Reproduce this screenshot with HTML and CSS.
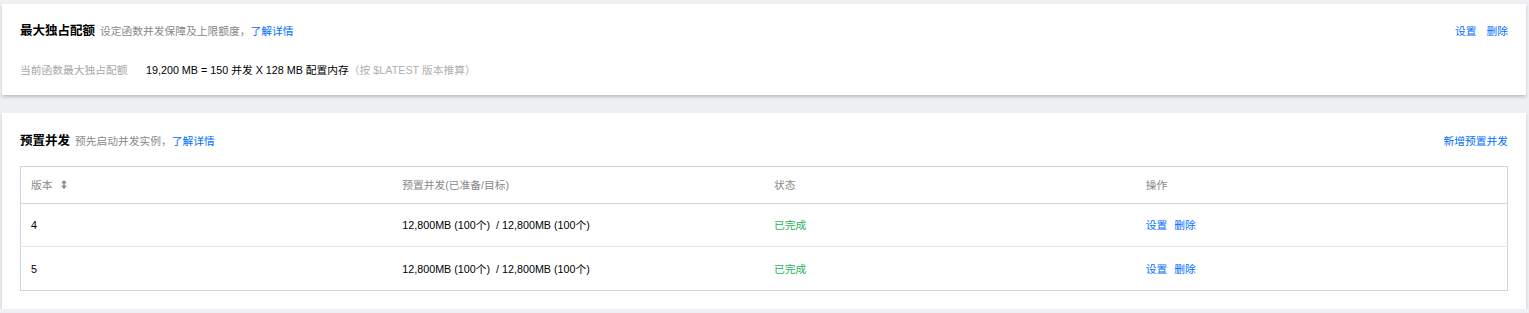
FILE: index.html
```html
<!DOCTYPE html>
<html lang="zh-CN">
<head>
<meta charset="utf-8">
<title>并发配额</title>
<link rel="stylesheet" href="styles.css">
</head>
<body>
<div class="page">
  <section class="card card-quota">
    <div class="card-head">
      <div class="head-left">
        <h3 class="title">最大独占配额</h3>
        <span class="desc">设定函数并发保障及上限额度，</span>
        <a class="link">了解详情</a>
      </div>
      <div class="head-right">
        <a class="link">设置</a>
        <a class="link">删除</a>
      </div>
    </div>
    <div class="info-row">
      <span class="info-label">当前函数最大独占配额</span>
      <span class="info-value">19,200 MB = 150 并发 X 128 MB 配置内存</span>
      <span class="info-note">（按 $LATEST 版本推算）</span>
    </div>
  </section>

  <section class="card card-provision">
    <div class="card-head">
      <div class="head-left">
        <h3 class="title">预置并发</h3>
        <span class="desc">预先启动并发实例，</span>
        <a class="link">了解详情</a>
      </div>
      <div class="head-right">
        <a class="link">新增预置并发</a>
      </div>
    </div>
    <table class="grid">
      <thead>
        <tr>
          <th>
            <span class="th-sort">版本
              <svg class="sort-icon" width="6" height="9" viewBox="0 0 6 9"><path d="M3 0 L6 3.2 H0 Z M3 9 L0 5.8 H6 Z M2.2 3 H3.8 V6 H2.2 Z" fill="#8a8a8a"/></svg>
            </span>
          </th>
          <th>预置并发(已准备/目标)</th>
          <th>状态</th>
          <th>操作</th>
        </tr>
      </thead>
      <tbody>
        <tr>
          <td>4</td>
          <td>12,800MB (100个)&nbsp; / 12,800MB (100个)</td>
          <td class="ok">已完成</td>
          <td class="ops"><a class="link">设置</a><a class="link">删除</a></td>
        </tr>
        <tr>
          <td>5</td>
          <td>12,800MB (100个)&nbsp; / 12,800MB (100个)</td>
          <td class="ok">已完成</td>
          <td class="ops"><a class="link">设置</a><a class="link">删除</a></td>
        </tr>
      </tbody>
    </table>
  </section>
</div>
</body>
</html>
```

FILE: styles.css
```css
* { box-sizing: border-box; }

html, body {
  margin: 0;
  padding: 0;
  background: #eff0f3;
}

body {
  font-family: "Liberation Sans", "Noto Sans CJK SC", sans-serif;
  font-size: 10.75px;
  color: #000;
}

.page {
  padding: 4px 3px 0 2px;
  display: flex;
  flex-direction: column;
  gap: 18px;
}

.card {
  background: #fff;
  box-shadow: 0 2px 3px rgba(0, 0, 0, 0.2);
  padding: 20px 18px 18px 18px;
}

.card-provision {
  padding-top: 21px;
  padding-bottom: 18px;
}

.card-head {
  display: flex;
  justify-content: space-between;
  align-items: center;
  height: 14px;
}

.head-left {
  display: flex;
  align-items: center;
  line-height: 14px;
}

.title {
  margin: 0 5px 0 0;
  font-size: 12.5px;
  font-weight: bold;
  color: #000;
}

.desc {
  color: #888;
}

.link {
  color: #006eff;
  cursor: pointer;
}

.head-right {
  display: flex;
  gap: 10px;
  line-height: 14px;
}

.info-row {
  display: flex;
  align-items: center;
  margin-top: 25px;
  line-height: 14px;
}

.info-label {
  width: 126px;
  color: #a8a8a8;
}

.info-value {
  color: #000;
}

.info-note {
  color: #b0b0b0;
}

.grid {
  width: 100%;
  margin-top: 18px;
  border-collapse: collapse;
  table-layout: fixed;
  border: 1px solid #cfd5de;
}

.grid th,
.grid td {
  text-align: left;
  padding: 0 10px;
  font-weight: normal;
  line-height: 14px;
}

.grid th {
  height: 37px;
  color: #888;
  border-bottom: 1px solid #cfd5de;
}

.grid td {
  height: 43px;
  border-bottom: 1px solid #e3e6eb;
  color: #000;
}

.grid tbody tr:last-child td {
  height: 44px;
  border-bottom: none;
}

.th-sort {
  display: inline-flex;
  align-items: center;
  gap: 8px;
}

.sort-icon {
  display: block;
  margin-top: -2px;
}

.grid td.ok {
  color: #1fb45a;
}

.ops .link + .link {
  margin-left: 7px;
}
```
